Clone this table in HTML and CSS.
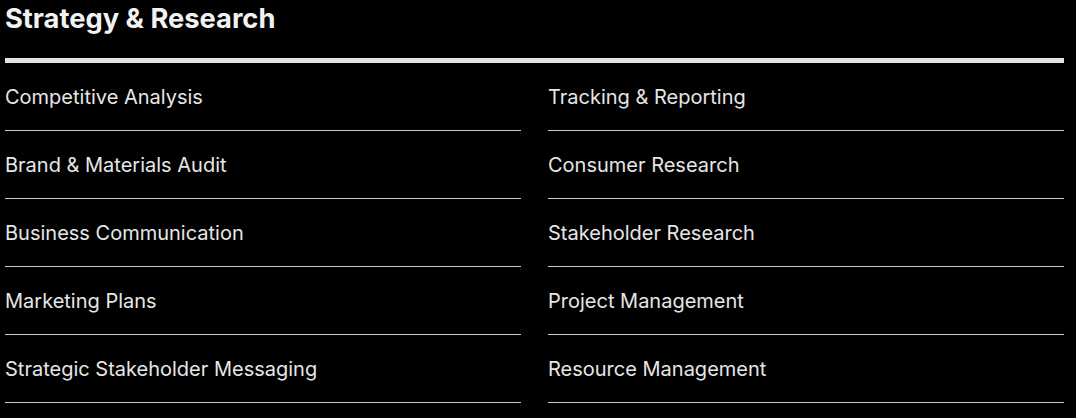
FILE: index.html
```html
<!DOCTYPE html>
<html lang="en">
<head>
<meta charset="utf-8">
<title>Strategy &amp; Research</title>
<link rel="stylesheet" href="styles.css">
</head>
<body>
  <section class="services">
    <h2 class="services-title">Strategy &amp; Research</h2>
    <ul class="services-list">
      <li class="services-item">Competitive Analysis</li>
      <li class="services-item">Tracking &amp; Reporting</li>
      <li class="services-item">Brand &amp; Materials Audit</li>
      <li class="services-item">Consumer Research</li>
      <li class="services-item">Business Communication</li>
      <li class="services-item">Stakeholder Research</li>
      <li class="services-item">Marketing Plans</li>
      <li class="services-item">Project Management</li>
      <li class="services-item">Strategic Stakeholder Messaging</li>
      <li class="services-item">Resource Management</li>
    </ul>
  </section>
</body>
</html>
```

FILE: styles.css
```css
html, body {
  margin: 0;
  padding: 0;
  background: #000;
}

body {
  font-family: Inter, "Noto Sans", sans-serif;
  color: #ececec;
}

.services {
  width: 1059px;
  padding: 3px 0 0 5px;
}

.services-title {
  margin: 0;
  font-size: 27.3px;
  line-height: 32px;
  font-weight: 700;
  color: #f2f2f2;
  padding-bottom: 23px;
  border-bottom: 5px solid #e3e3e3;
}

.services-list {
  list-style: none;
  margin: 0;
  padding: 0;
  display: grid;
  grid-template-columns: 1fr 1fr;
  column-gap: 27px;
}

.services-item {
  font-size: 20px;
  line-height: 24px;
  padding: 22px 0 21px;
  border-bottom: 1px solid #c9c9c9;
  color: #e6e6e6;
}
```
